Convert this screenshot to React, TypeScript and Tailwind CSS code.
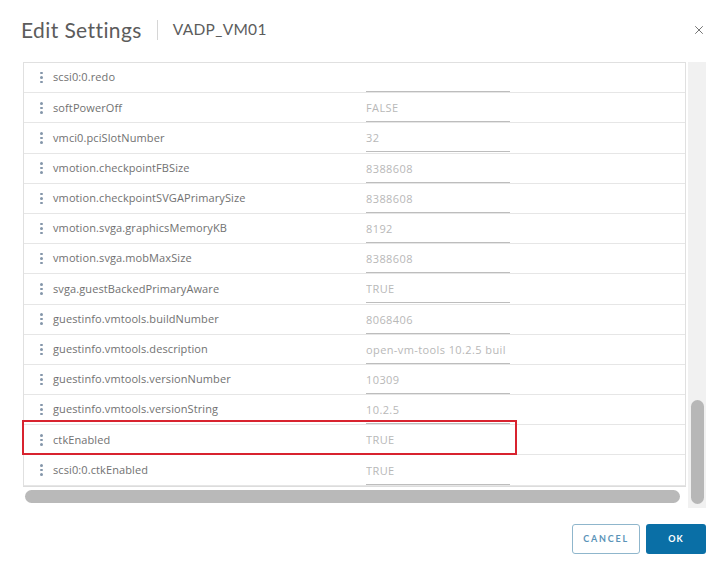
import { X } from "lucide-react"

const rows: { key: string; value: string }[] = [
  { key: "scsi0:0.redo", value: "" },
  { key: "softPowerOff", value: "FALSE" },
  { key: "vmci0.pciSlotNumber", value: "32" },
  { key: "vmotion.checkpointFBSize", value: "8388608" },
  { key: "vmotion.checkpointSVGAPrimarySize", value: "8388608" },
  { key: "vmotion.svga.graphicsMemoryKB", value: "8192" },
  { key: "vmotion.svga.mobMaxSize", value: "8388608" },
  { key: "svga.guestBackedPrimaryAware", value: "TRUE" },
  { key: "guestinfo.vmtools.buildNumber", value: "8068406" },
  { key: "guestinfo.vmtools.description", value: "open-vm-tools 10.2.5 buil" },
  { key: "guestinfo.vmtools.versionNumber", value: "10309" },
  { key: "guestinfo.vmtools.versionString", value: "10.2.5" },
  { key: "ctkEnabled", value: "TRUE" },
  { key: "scsi0:0.ctkEnabled", value: "TRUE" },
]

const Dots = () => (
  <div className="flex flex-col gap-[2px] w-[3px] items-center">
    <span className="w-[2.5px] h-[2.5px] rounded-full bg-[#8496aa]" />
    <span className="w-[2.5px] h-[2.5px] rounded-full bg-[#8496aa]" />
    <span className="w-[2.5px] h-[2.5px] rounded-full bg-[#8496aa]" />
  </div>
)

const Row = ({ k, v, highlight }: { k: string; v: string; highlight?: boolean }) => (
  <div className="relative flex items-center h-[30.2px] border-b border-[#e6e6e6]">
    <div className="w-[342px] flex items-center pl-[16px] gap-[10px]">
      <Dots />
      <span className="text-[11px] text-[#717171] whitespace-nowrap tracking-[0.1px]">{k}</span>
    </div>
    <div className="w-[144px] h-full flex flex-col justify-center pt-[1px]">
      <div className="border-b border-[#bdbdbd] pb-[3px] overflow-hidden whitespace-nowrap">
        <span className="text-[11px] text-[#b8b8b8] leading-[14px] tracking-[0.4px]">{v || "\u00a0"}</span>
      </div>
    </div>
    {highlight && (
      <div className="absolute left-[-2px] top-[-5px] w-[495px] h-[35px] border-2 border-[#d8232f]" />
    )}
  </div>
)

export default function App() {
  return (
    <div className="w-[720px] h-[570px] bg-white flex flex-col font-['Open_Sans',sans-serif]">
      <div className="flex items-center h-[62px] pl-[21px] pr-[14px] pb-[2px] font-['Lato',sans-serif]">
        <span className="text-[21px] text-[#5c5c5c] tracking-[0.4px]">Edit Settings</span>
        <span className="mx-[15px] w-px h-[20px] bg-[#d6d6d6]" />
        <span className="text-[15.5px] text-[#5c5c5c] tracking-[0.3px]">VADP_VM01</span>
        <div className="flex-1" />
        <X className="w-[14px] h-[14px] text-[#6a6a6a]" strokeWidth={1.6} />
      </div>
      <div className="flex pl-[23px] h-[446px]">
        <div className="w-[663px] flex flex-col">
          <div className="border border-[#e0e0e0] border-b-0">
            {rows.map((r) => (
              <Row key={r.key} k={r.key} v={r.value} highlight={r.key === "ctkEnabled"} />
            ))}
          </div>
          <div className="h-[4px] border-t border-[#dcdcdc]" />
          <div className="h-[13px] mr-[6px] ml-[2px] rounded-full bg-[#b9b9b9]" />
        </div>
        <div className="ml-[2px] w-[18px] bg-[#f1f1f1] h-[446px] flex flex-col justify-end pb-[4px] items-center">
          <div className="w-[13px] h-[104px] rounded-full bg-[#b7b7b7]" />
        </div>
      </div>
      <div className="flex justify-end gap-[6px] pr-[14px] pt-[16px] font-['Lato',sans-serif]">
        <button className="w-[68px] h-[30px] border border-[#8fb6cc] rounded-[3px] text-[9px] font-bold tracking-[1.8px] text-[#5a93b8]">
          CANCEL
        </button>
        <button className="w-[60px] h-[30px] rounded-[3px] bg-[#0a6fa6] text-[9px] font-bold tracking-[1px] text-white">
          OK
        </button>
      </div>
    </div>
  )
}
